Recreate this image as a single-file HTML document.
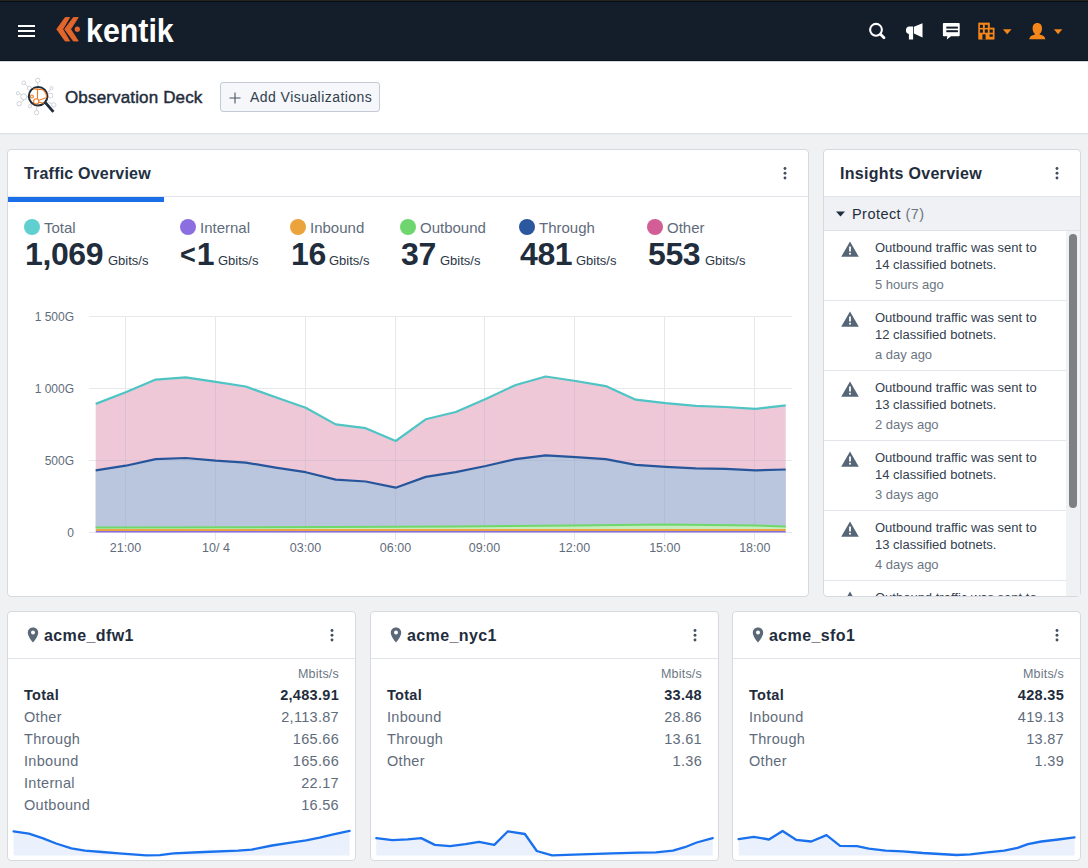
<!DOCTYPE html>
<html><head><meta charset="utf-8">
<style>
*{box-sizing:border-box;margin:0;padding:0}
html,body{width:1088px;height:868px;overflow:hidden;background:#f0f1f3;font-family:"Liberation Sans",sans-serif;color:#1f2d3d;position:relative}
.abs{position:absolute}
.card{background:#fff;border:1px solid #d6dae0;border-radius:4px}
.t{position:absolute;white-space:nowrap;line-height:1}
.gray{color:#5f6c7b}
.dots{position:absolute;width:3px}
.dots i{display:block;width:3px;height:3px;border-radius:50%;background:#3c4654;margin-bottom:1.7px}
</style></head><body>
<div class="abs" style="left:0;top:0;width:1088px;height:61px;background:#141e2b;border-top:1px solid #2a2420;border-bottom:1px solid #0c121a"></div>
<div class="abs" style="left:18px;top:25px;width:17px;height:2px;background:#fff"></div>
<div class="abs" style="left:18px;top:30px;width:17px;height:2px;background:#fff"></div>
<div class="abs" style="left:18px;top:35px;width:17px;height:2px;background:#fff"></div>
<svg class="abs" style="left:0;top:0" width="180" height="61" viewBox="0 0 180 61">
  <g fill="#e4652a" stroke="#e4652a" stroke-width="0.9" stroke-linejoin="round">
  <path d="M65.2 17.5 L69.6 17.5 L62.7 29.2 L69.6 41 L65.2 41 L56.8 29.2 Z"/>
  <path d="M73.4 17.5 L78.2 17.5 L70.6 29.2 L78.2 41 L73.4 41 L64.7 29.2 Z"/>
  </g>
  <circle cx="77.3" cy="29.2" r="2.6" fill="#e4652a"/>
</svg>
<div class="t" style="left:86px;top:13.5px;font-size:33px;font-weight:bold;color:#fff;transform:scaleX(0.92);transform-origin:0 0">kentik</div>
<svg class="abs" style="left:860px;top:15px" width="220" height="30" viewBox="860 15 220 30">
  <circle cx="876" cy="29.8" r="5.9" fill="none" stroke="#fff" stroke-width="2.1"/>
  <path d="M880.5 34.3 L884 37.8" stroke="#fff" stroke-width="2.8" stroke-linecap="round"/>
  <path d="M913.1 26.5 L909.3 26.5 C907 26.5 905.9 28.3 905.9 30.2 C905.9 32.3 907 33.7 908.9 33.9 L908.9 39.5 L913.1 39.5 Z" fill="#fff"/>
  <path d="M913.9 26.7 L922.5 23.3 L922.5 37.6 L913.9 33.4 Z" fill="#fff"/>
  <path d="M943.8 22.9 L958.8 22.9 Q959.7 22.9 959.7 23.8 L959.7 35.3 Q959.7 36.2 958.8 36.2 L951 36.2 L946.8 39.5 L947.3 36.2 L943.8 36.2 Q942.9 36.2 942.9 35.3 L942.9 23.8 Q942.9 22.9 943.8 22.9 Z" fill="#fff"/>
  <rect x="946.3" y="26.6" width="11.6" height="2" fill="#141e2b"/>
  <rect x="946.3" y="30.2" width="11.6" height="2" fill="#141e2b"/>
  <path d="M978.6 22.9 H989.5 V27.9 H994.2 V39.2 H978.6 Z" fill="#f5861a" stroke="#f5861a" stroke-width="0.6" stroke-linejoin="round"/>
  <g fill="#141e2b">
    <rect x="979.9" y="24.8" width="3" height="3.1"/><rect x="984.8" y="24.8" width="3" height="3.1"/>
    <rect x="979.9" y="29.5" width="3" height="3.2"/><rect x="984.8" y="29.5" width="3" height="3.2"/><rect x="989.6" y="29.5" width="3.2" height="3.2"/>
    <rect x="982.4" y="34.3" width="3.2" height="5.3"/><rect x="989.6" y="34.3" width="3.2" height="2.5"/>
  </g>
  <path d="M1002.9 29.2 L1011.5 29.2 L1007.2 34.2 Z" fill="#f5861a"/>
  <path d="M1037.3 23.1 C1040.5 23.1 1042 25.4 1042 28.5 C1042 31.2 1041 33 1039.7 33.8 L1039.7 34.6 C1043 35.3 1045 36.6 1045.4 39.3 L1029.2 39.3 C1029.6 36.6 1031.6 35.3 1034.9 34.6 L1034.9 33.8 C1033.6 33 1032.6 31.2 1032.6 28.5 C1032.6 25.4 1034.1 23.1 1037.3 23.1 Z" fill="#f5861a"/>
  <path d="M1053.9 29.2 L1062.3 29.2 L1058.1 34.2 Z" fill="#f5861a"/>
</svg>
<div class="abs" style="left:0;top:61px;width:1088px;height:73px;background:#fff;border-bottom:1px solid #e0e1e4"></div>
<div class="abs" style="left:0;top:134px;width:1088px;height:1px;background:#e9eaec"></div>
<div class="abs" style="left:0;top:61px;width:1088px;height:1px;background:#d5d8dc"></div>
<div class="abs" style="left:0;top:1px;width:1088px;height:1px;background:#020e1a"></div>
<svg class="abs" style="left:10px;top:70px" width="55" height="50" viewBox="10 70 55 50">
  <g fill="#fff" stroke="#c8cdd4" stroke-width="0.9">
    <path d="M37.8 82.5 L37.8 86 M25.2 84.2 L30 89 M19.4 93.7 L25 96 M21 102.5 L24.5 99.5 M50.8 89.5 L47.5 92.5 M52.2 104 L48.5 102 M36.5 110.4 L36.8 106.5 M31 105.5 L32.5 104 M26.7 96.8 L28.5 96.8"/>
    <circle cx="37.8" cy="80.3" r="2.2"/><circle cx="23.8" cy="82.8" r="1.8"/><circle cx="51.5" cy="88.1" r="1.6"/>
    <circle cx="17.9" cy="93.3" r="1.6"/><circle cx="23.8" cy="96.8" r="3"/><circle cx="19.2" cy="103.7" r="2.2"/>
    <circle cx="50.3" cy="95.6" r="2.5"/><circle cx="53.8" cy="104.9" r="2.2"/><circle cx="29.9" cy="106.3" r="1.6"/>
    <circle cx="36.5" cy="112.6" r="2.2"/><circle cx="29.5" cy="88.3" r="2"/>
  </g>
  <circle cx="38.1" cy="96.2" r="9.3" fill="#fff" stroke="#1f2d3d" stroke-width="2"/>
  <g fill="none" stroke="#ec7a20" stroke-width="1.1">
    <circle cx="36.2" cy="101.4" r="2.6"/><circle cx="31.9" cy="96.5" r="1.5"/>
    <path d="M33 89 L42 89.5 Q46.5 92 46.6 97.4 L39.2 100.2 M37.5 88.5 L37.5 98.8 M39 102.3 L44 103.2"/>
  </g>
  <path d="M46.5 103.8 L52.5 110.8" stroke="#1f2d3d" stroke-width="2.8" stroke-linecap="square"/>
</svg>
<div class="t" style="left:65px;top:89px;font-size:17px;color:#1f2d3d;-webkit-text-stroke:0.45px #1f2d3d;letter-spacing:0.15px">Observation Deck</div>
<div class="abs" style="left:220px;top:82px;width:160px;height:30px;background:#f5f7fa;border:1px solid #c3cad3;border-radius:3px"></div>
<svg class="abs" style="left:229px;top:92px" width="12" height="12" viewBox="0 0 12 12"><path d="M6 0.5 V11.5 M0.5 6 H11.5" stroke="#4a5566" stroke-width="1.1"/></svg>
<div class="t" style="left:250px;top:90px;font-size:14px;color:#323e4d;letter-spacing:0.45px">Add Visualizations</div>
<div class="abs card" style="left:7px;top:149px;width:802px;height:448px"></div>
<div class="abs" style="left:8px;top:196px;width:800px;height:1px;background:#e1e4e8"></div>
<div class="abs" style="left:8px;top:197px;width:156px;height:5px;background:#1a6fe8"></div>
<div class="t" style="left:24px;top:166px;font-size:16px;font-weight:bold;color:#223042;letter-spacing:0.2px">Traffic Overview</div>
<svg class="abs" style="left:782.3px;top:166.1px" width="6" height="15" viewBox="0 0 6 15"><g fill="#435060"><circle cx="3" cy="2.5" r="1.45"/><circle cx="3" cy="7.25" r="1.45"/><circle cx="3" cy="12" r="1.45"/></g></svg>
<svg class="abs" style="left:24px;top:219px" width="16" height="16"><circle cx="8" cy="8" r="8" fill="#5fcfcf"/></svg>
<div class="t gray" style="left:44px;top:219.5px;font-size:15px">Total</div>
<div class="t" style="left:25px;top:238px;font-size:32px;font-weight:bold;letter-spacing:-0.4px">1,069</div>
<div class="t" style="left:108px;top:254px;font-size:13px;color:#2b3645">Gbits/s</div>
<svg class="abs" style="left:180px;top:219px" width="16" height="16"><circle cx="8" cy="8" r="8" fill="#8b6fe0"/></svg>
<div class="t gray" style="left:200px;top:219.5px;font-size:15px">Internal</div>
<div class="t" style="left:181px;top:238px;font-size:32px;font-weight:bold;letter-spacing:-0.4px"><span style="font-size:27px;position:relative;top:-1px;margin-left:-1px;letter-spacing:1px">&lt;</span>1</div>
<div class="t" style="left:218px;top:254px;font-size:13px;color:#2b3645">Gbits/s</div>
<svg class="abs" style="left:290px;top:219px" width="16" height="16"><circle cx="8" cy="8" r="8" fill="#eba43c"/></svg>
<div class="t gray" style="left:310px;top:219.5px;font-size:15px">Inbound</div>
<div class="t" style="left:291px;top:238px;font-size:32px;font-weight:bold;letter-spacing:-0.4px">16</div>
<div class="t" style="left:329px;top:254px;font-size:13px;color:#2b3645">Gbits/s</div>
<svg class="abs" style="left:400px;top:219px" width="16" height="16"><circle cx="8" cy="8" r="8" fill="#6fd66f"/></svg>
<div class="t gray" style="left:420px;top:219.5px;font-size:15px">Outbound</div>
<div class="t" style="left:401px;top:238px;font-size:32px;font-weight:bold;letter-spacing:-0.4px">37</div>
<div class="t" style="left:440px;top:254px;font-size:13px;color:#2b3645">Gbits/s</div>
<svg class="abs" style="left:519px;top:219px" width="16" height="16"><circle cx="8" cy="8" r="8" fill="#2b579f"/></svg>
<div class="t gray" style="left:539px;top:219.5px;font-size:15px">Through</div>
<div class="t" style="left:520px;top:238px;font-size:32px;font-weight:bold;letter-spacing:-0.4px">481</div>
<div class="t" style="left:576px;top:254px;font-size:13px;color:#2b3645">Gbits/s</div>
<svg class="abs" style="left:647px;top:219px" width="16" height="16"><circle cx="8" cy="8" r="8" fill="#d25e95"/></svg>
<div class="t gray" style="left:667px;top:219.5px;font-size:15px">Other</div>
<div class="t" style="left:648px;top:238px;font-size:32px;font-weight:bold;letter-spacing:-0.4px">553</div>
<div class="t" style="left:705px;top:254px;font-size:13px;color:#2b3645">Gbits/s</div>
<svg class="abs" style="left:0;top:0" width="1088" height="868" viewBox="0 0 1088 868">
  <g stroke="#e6e8eb" stroke-width="1" fill="none">
    <path d="M89 316.5 H792 M89 388.5 H792 M89 460.5 H792 M89 532.5 H792"/>
    <path d="M125.5 316 V540 M215.5 316 V540 M305.5 316 V540 M395.5 316 V540 M484.5 316 V540 M574.5 316 V540 M664.5 316 V540 M754.5 316 V540"/>
  </g>
  <polygon fill="#efc8d7" points="95.7,403.9 125.7,392.3 155.7,379.6 185.7,377.3 215.7,381.9 245.7,386.5 275.7,397.3 305.7,407.8 335.7,424.4 365.7,428.2 395.7,441.0 425.7,419.3 455.7,412.0 485.7,398.9 515.7,385.0 545.7,376.5 575.7,381.0 605.7,386.1 635.7,399.7 665.7,403.1 695.7,405.8 725.7,407.0 755.7,408.9 785.7,405.4 785.7,528 95.7,528"/>
  <polygon fill="#bac6de" points="95.7,470.3 125.7,465.7 155.7,459.1 185.7,458.0 215.7,460.7 245.7,462.6 275.7,467.6 305.7,472.2 335.7,479.6 365.7,481.5 395.7,487.7 425.7,476.9 455.7,472.2 485.7,466.0 515.7,459.1 545.7,455.3 575.7,457.2 605.7,459.1 635.7,464.9 665.7,466.8 695.7,468.4 725.7,468.8 755.7,470.3 785.7,469.5 785.7,528 95.7,528"/>
  <g stroke="#9aa6bb" stroke-width="1" fill="none" opacity="0.22">
    <path d="M125.5 392 V528 M215.5 382 V528 M305.5 408 V528 M395.5 441 V528 M484.5 399 V528 M574.5 381 V528 M664.5 403 V528 M754.5 409 V528 M95.7 460.5 H785.7"/>
  </g>
  <polygon fill="#c6ecc0" points="95.7,527.5 335,527 455,526.5 575,525.5 665,524.5 755,525.5 785.7,526.5 785.7,529 95.7,529"/>
  <polyline fill="none" stroke="#6fd86a" stroke-width="2" points="95.7,527.5 335,527 455,526.5 575,525.5 665,524.5 755,525.5 785.7,526.5"/>
  <rect x="95.7" y="529" width="690" height="2" fill="#eba53e"/>
  <rect x="95.7" y="531" width="690" height="1.5" fill="#8b6de0"/>
  <polyline fill="none" stroke="#27559b" stroke-width="2.2" stroke-linejoin="round" points="95.7,470.3 125.7,465.7 155.7,459.1 185.7,458.0 215.7,460.7 245.7,462.6 275.7,467.6 305.7,472.2 335.7,479.6 365.7,481.5 395.7,487.7 425.7,476.9 455.7,472.2 485.7,466.0 515.7,459.1 545.7,455.3 575.7,457.2 605.7,459.1 635.7,464.9 665.7,466.8 695.7,468.4 725.7,468.8 755.7,470.3 785.7,469.5"/>
  <polyline fill="none" stroke="#4ec5c4" stroke-width="2.2" stroke-linejoin="round" points="95.7,403.9 125.7,392.3 155.7,379.6 185.7,377.3 215.7,381.9 245.7,386.5 275.7,397.3 305.7,407.8 335.7,424.4 365.7,428.2 395.7,441.0 425.7,419.3 455.7,412.0 485.7,398.9 515.7,385.0 545.7,376.5 575.7,381.0 605.7,386.1 635.7,399.7 665.7,403.1 695.7,405.8 725.7,407.0 755.7,408.9 785.7,405.4"/>
  <g font-family="Liberation Sans" font-size="12" fill="#5f6c7b">
    <text x="74" y="321" text-anchor="end">1 500G</text>
    <text x="74" y="393" text-anchor="end">1 000G</text>
    <text x="74" y="465" text-anchor="end">500G</text>
    <text x="74" y="537" text-anchor="end">0</text>
    <text font-size="12.5" x="125.5" y="552" text-anchor="middle">21:00</text>
    <text font-size="12.5" x="216" y="552" text-anchor="middle">10/ 4</text>
    <text font-size="12.5" x="305.5" y="552" text-anchor="middle">03:00</text>
    <text font-size="12.5" x="395.5" y="552" text-anchor="middle">06:00</text>
    <text font-size="12.5" x="484.5" y="552" text-anchor="middle">09:00</text>
    <text font-size="12.5" x="574.5" y="552" text-anchor="middle">12:00</text>
    <text font-size="12.5" x="664.8" y="552" text-anchor="middle">15:00</text>
    <text font-size="12.5" x="754.8" y="552" text-anchor="middle">18:00</text>
  </g>
</svg>
<div class="abs card" style="left:823px;top:149px;width:258px;height:448px"></div>
<div class="t" style="left:840px;top:166px;font-size:16px;font-weight:bold;color:#1f2d3d;letter-spacing:0.3px">Insights Overview</div>
<svg class="abs" style="left:1054.0px;top:166.0px" width="6" height="15" viewBox="0 0 6 15"><g fill="#435060"><circle cx="3" cy="2.5" r="1.45"/><circle cx="3" cy="7.25" r="1.45"/><circle cx="3" cy="12" r="1.45"/></g></svg>
<div class="abs" style="left:824px;top:196px;width:256px;height:35px;background:#eff1f4;border-top:1px solid #e1e4e8;border-bottom:1px solid #dfe2e7"></div>
<svg class="abs" style="left:836px;top:211px" width="9" height="6"><path d="M0 0.5 H9 L4.5 5.5Z" fill="#1f2d3d"/></svg>
<div class="t" style="left:852px;top:207px;font-size:14.5px;color:#1f2d3d;letter-spacing:0.45px">Protect <span style="color:#6b7683">(7)</span></div>
<div class="abs" style="left:1066px;top:231px;width:14px;height:365px;background:#f0f1f3"></div>
<div class="abs" style="left:1069px;top:234px;width:8px;height:274px;background:#7d7f82;border-radius:4px"></div>
<div class="abs" style="left:824px;top:231px;width:242px;height:365px;overflow:hidden">
<svg class="abs" style="left:17px;top:10px" width="18" height="16" viewBox="0 0 18 16"><path d="M9 0.5 L17.8 15.8 H0.2 Z" fill="#566677"/><rect x="8.1" y="5.5" width="1.8" height="5" fill="#fff"/><rect x="8.1" y="11.8" width="1.8" height="1.8" fill="#fff"/></svg>
<div class="t" style="left:51px;top:8px;font-size:13px;line-height:17px;color:#35414f">Outbound traffic was sent to<br>14 classified botnets.</div>
<div class="t" style="left:51px;top:47px;font-size:13px;color:#6b7683">5 hours ago</div>
<div class="abs" style="left:0;top:69px;width:242px;height:1px;background:#e3e6ea"></div>
<svg class="abs" style="left:17px;top:80px" width="18" height="16" viewBox="0 0 18 16"><path d="M9 0.5 L17.8 15.8 H0.2 Z" fill="#566677"/><rect x="8.1" y="5.5" width="1.8" height="5" fill="#fff"/><rect x="8.1" y="11.8" width="1.8" height="1.8" fill="#fff"/></svg>
<div class="t" style="left:51px;top:78px;font-size:13px;line-height:17px;color:#35414f">Outbound traffic was sent to<br>12 classified botnets.</div>
<div class="t" style="left:51px;top:117px;font-size:13px;color:#6b7683">a day ago</div>
<div class="abs" style="left:0;top:139px;width:242px;height:1px;background:#e3e6ea"></div>
<svg class="abs" style="left:17px;top:150px" width="18" height="16" viewBox="0 0 18 16"><path d="M9 0.5 L17.8 15.8 H0.2 Z" fill="#566677"/><rect x="8.1" y="5.5" width="1.8" height="5" fill="#fff"/><rect x="8.1" y="11.8" width="1.8" height="1.8" fill="#fff"/></svg>
<div class="t" style="left:51px;top:148px;font-size:13px;line-height:17px;color:#35414f">Outbound traffic was sent to<br>13 classified botnets.</div>
<div class="t" style="left:51px;top:187px;font-size:13px;color:#6b7683">2 days ago</div>
<div class="abs" style="left:0;top:209px;width:242px;height:1px;background:#e3e6ea"></div>
<svg class="abs" style="left:17px;top:220px" width="18" height="16" viewBox="0 0 18 16"><path d="M9 0.5 L17.8 15.8 H0.2 Z" fill="#566677"/><rect x="8.1" y="5.5" width="1.8" height="5" fill="#fff"/><rect x="8.1" y="11.8" width="1.8" height="1.8" fill="#fff"/></svg>
<div class="t" style="left:51px;top:218px;font-size:13px;line-height:17px;color:#35414f">Outbound traffic was sent to<br>14 classified botnets.</div>
<div class="t" style="left:51px;top:257px;font-size:13px;color:#6b7683">3 days ago</div>
<div class="abs" style="left:0;top:279px;width:242px;height:1px;background:#e3e6ea"></div>
<svg class="abs" style="left:17px;top:290px" width="18" height="16" viewBox="0 0 18 16"><path d="M9 0.5 L17.8 15.8 H0.2 Z" fill="#566677"/><rect x="8.1" y="5.5" width="1.8" height="5" fill="#fff"/><rect x="8.1" y="11.8" width="1.8" height="1.8" fill="#fff"/></svg>
<div class="t" style="left:51px;top:288px;font-size:13px;line-height:17px;color:#35414f">Outbound traffic was sent to<br>13 classified botnets.</div>
<div class="t" style="left:51px;top:327px;font-size:13px;color:#6b7683">4 days ago</div>
<div class="abs" style="left:0;top:349px;width:242px;height:1px;background:#e3e6ea"></div>
<svg class="abs" style="left:17px;top:360px" width="18" height="16" viewBox="0 0 18 16"><path d="M9 0.5 L17.8 15.8 H0.2 Z" fill="#566677"/><rect x="8.1" y="5.5" width="1.8" height="5" fill="#fff"/><rect x="8.1" y="11.8" width="1.8" height="1.8" fill="#fff"/></svg>
<div class="t" style="left:51px;top:358px;font-size:13px;line-height:17px;color:#35414f">Outbound traffic was sent to<br>13 classified botnets.</div>
<div class="t" style="left:51px;top:397px;font-size:13px;color:#6b7683">5 days ago</div>
<div class="abs" style="left:0;top:419px;width:242px;height:1px;background:#e3e6ea"></div>
</div>
<div class="abs card" style="left:7px;top:611px;width:349px;height:250px"></div>
<div class="abs" style="left:8px;top:658px;width:347px;height:1px;background:#e1e4e8"></div>
<svg class="abs" style="left:27px;top:627px" width="12" height="17" viewBox="0 0 12 17"><path d="M6 0.6 C9 0.6 11.2 2.8 11.2 5.7 C11.2 9 8 12.8 6 15.6 C4 12.8 0.8 9 0.8 5.7 C0.8 2.8 3 0.6 6 0.6Z" fill="#5a6878"/><circle cx="6" cy="5.6" r="2" fill="#fff"/></svg>
<div class="t" style="left:44px;top:628px;font-size:16px;font-weight:bold;color:#1f2d3d;letter-spacing:0.4px">acme_dfw1</div>
<svg class="abs" style="left:329.3px;top:627.9px" width="6" height="15" viewBox="0 0 6 15"><g fill="#435060"><circle cx="3" cy="2.5" r="1.45"/><circle cx="3" cy="7.25" r="1.45"/><circle cx="3" cy="12" r="1.45"/></g></svg>
<div class="t" style="left:339px;top:667.5px;width:0;font-size:12.5px;color:#6b7683;letter-spacing:0.2px"><span style="position:absolute;right:0">Mbits/s</span></div>
<div class="t" style="left:24px;top:688.0px;font-size:14.5px;letter-spacing:0.3px;font-weight:bold;color:#1f2d3d">Total</div>
<div class="t" style="left:339px;top:688.0px;width:0;font-size:14.5px;letter-spacing:0.3px;font-weight:bold;color:#1f2d3d"><span style="position:absolute;right:0">2,483.91</span></div>
<div class="t" style="left:24px;top:710.0px;font-size:14.5px;letter-spacing:0.3px;color:#5f6c7b">Other</div>
<div class="t" style="left:339px;top:710.0px;width:0;font-size:14.5px;letter-spacing:0.3px;color:#5f6c7b"><span style="position:absolute;right:0">2,113.87</span></div>
<div class="t" style="left:24px;top:732.0px;font-size:14.5px;letter-spacing:0.3px;color:#5f6c7b">Through</div>
<div class="t" style="left:339px;top:732.0px;width:0;font-size:14.5px;letter-spacing:0.3px;color:#5f6c7b"><span style="position:absolute;right:0">165.66</span></div>
<div class="t" style="left:24px;top:754.0px;font-size:14.5px;letter-spacing:0.3px;color:#5f6c7b">Inbound</div>
<div class="t" style="left:339px;top:754.0px;width:0;font-size:14.5px;letter-spacing:0.3px;color:#5f6c7b"><span style="position:absolute;right:0">165.66</span></div>
<div class="t" style="left:24px;top:776.0px;font-size:14.5px;letter-spacing:0.3px;color:#5f6c7b">Internal</div>
<div class="t" style="left:339px;top:776.0px;width:0;font-size:14.5px;letter-spacing:0.3px;color:#5f6c7b"><span style="position:absolute;right:0">22.17</span></div>
<div class="t" style="left:24px;top:798.0px;font-size:14.5px;letter-spacing:0.3px;color:#5f6c7b">Outbound</div>
<div class="t" style="left:339px;top:798.0px;width:0;font-size:14.5px;letter-spacing:0.3px;color:#5f6c7b"><span style="position:absolute;right:0">16.56</span></div>
<svg class="abs" style="left:0;top:0" width="1088" height="868"><polygon fill="#eaf0fc" points="13.6,831.3 28.9,833.6 42.5,838.1 56.1,843.5 71.4,848.3 85.0,850.6 102.0,852.0 119.0,853.4 146.2,855.4 159.8,855.1 173.4,853.4 204.0,852.0 238.1,850.6 251.7,849.6 272.1,845.5 289.1,842.8 306.1,840.4 319.7,837.7 333.3,834.3 349.6,830.9 349.6,855.5 13.6,855.5"/><polyline fill="none" stroke="#1a71ee" stroke-width="2.3" stroke-linejoin="round" stroke-linecap="round" points="13.6,831.3 28.9,833.6 42.5,838.1 56.1,843.5 71.4,848.3 85.0,850.6 102.0,852.0 119.0,853.4 146.2,855.4 159.8,855.1 173.4,853.4 204.0,852.0 238.1,850.6 251.7,849.6 272.1,845.5 289.1,842.8 306.1,840.4 319.7,837.7 333.3,834.3 349.6,830.9"/></svg>
<div class="abs card" style="left:370px;top:611px;width:349px;height:250px"></div>
<div class="abs" style="left:371px;top:658px;width:347px;height:1px;background:#e1e4e8"></div>
<svg class="abs" style="left:390px;top:627px" width="12" height="17" viewBox="0 0 12 17"><path d="M6 0.6 C9 0.6 11.2 2.8 11.2 5.7 C11.2 9 8 12.8 6 15.6 C4 12.8 0.8 9 0.8 5.7 C0.8 2.8 3 0.6 6 0.6Z" fill="#5a6878"/><circle cx="6" cy="5.6" r="2" fill="#fff"/></svg>
<div class="t" style="left:407px;top:628px;font-size:16px;font-weight:bold;color:#1f2d3d;letter-spacing:0.4px">acme_nyc1</div>
<svg class="abs" style="left:692.3px;top:627.9px" width="6" height="15" viewBox="0 0 6 15"><g fill="#435060"><circle cx="3" cy="2.5" r="1.45"/><circle cx="3" cy="7.25" r="1.45"/><circle cx="3" cy="12" r="1.45"/></g></svg>
<div class="t" style="left:702px;top:667.5px;width:0;font-size:12.5px;color:#6b7683;letter-spacing:0.2px"><span style="position:absolute;right:0">Mbits/s</span></div>
<div class="t" style="left:387px;top:688.0px;font-size:14.5px;letter-spacing:0.3px;font-weight:bold;color:#1f2d3d">Total</div>
<div class="t" style="left:702px;top:688.0px;width:0;font-size:14.5px;letter-spacing:0.3px;font-weight:bold;color:#1f2d3d"><span style="position:absolute;right:0">33.48</span></div>
<div class="t" style="left:387px;top:710.0px;font-size:14.5px;letter-spacing:0.3px;color:#5f6c7b">Inbound</div>
<div class="t" style="left:702px;top:710.0px;width:0;font-size:14.5px;letter-spacing:0.3px;color:#5f6c7b"><span style="position:absolute;right:0">28.86</span></div>
<div class="t" style="left:387px;top:732.0px;font-size:14.5px;letter-spacing:0.3px;color:#5f6c7b">Through</div>
<div class="t" style="left:702px;top:732.0px;width:0;font-size:14.5px;letter-spacing:0.3px;color:#5f6c7b"><span style="position:absolute;right:0">13.61</span></div>
<div class="t" style="left:387px;top:754.0px;font-size:14.5px;letter-spacing:0.3px;color:#5f6c7b">Other</div>
<div class="t" style="left:702px;top:754.0px;width:0;font-size:14.5px;letter-spacing:0.3px;color:#5f6c7b"><span style="position:absolute;right:0">1.36</span></div>
<svg class="abs" style="left:0;top:0" width="1088" height="868"><polygon fill="#eaf0fc" points="376.3,838.1 392.3,840.1 407.6,839.4 421.2,838.1 434.8,844.9 450.1,846.2 465.4,844.2 479.0,841.8 494.3,844.9 507.9,831.3 524.9,834.0 536.8,851.0 552.1,855.4 581.1,854.4 611.7,853.4 638.9,852.7 655.9,852.3 672.9,850.6 684.8,847.2 696.7,842.5 712.7,838.1 712.7,855.5 376.3,855.5"/><polyline fill="none" stroke="#1a71ee" stroke-width="2.3" stroke-linejoin="round" stroke-linecap="round" points="376.3,838.1 392.3,840.1 407.6,839.4 421.2,838.1 434.8,844.9 450.1,846.2 465.4,844.2 479.0,841.8 494.3,844.9 507.9,831.3 524.9,834.0 536.8,851.0 552.1,855.4 581.1,854.4 611.7,853.4 638.9,852.7 655.9,852.3 672.9,850.6 684.8,847.2 696.7,842.5 712.7,838.1"/></svg>
<div class="abs card" style="left:732px;top:611px;width:349px;height:250px"></div>
<div class="abs" style="left:733px;top:658px;width:347px;height:1px;background:#e1e4e8"></div>
<svg class="abs" style="left:752px;top:627px" width="12" height="17" viewBox="0 0 12 17"><path d="M6 0.6 C9 0.6 11.2 2.8 11.2 5.7 C11.2 9 8 12.8 6 15.6 C4 12.8 0.8 9 0.8 5.7 C0.8 2.8 3 0.6 6 0.6Z" fill="#5a6878"/><circle cx="6" cy="5.6" r="2" fill="#fff"/></svg>
<div class="t" style="left:769px;top:628px;font-size:16px;font-weight:bold;color:#1f2d3d;letter-spacing:0.4px">acme_sfo1</div>
<svg class="abs" style="left:1054.3px;top:627.9px" width="6" height="15" viewBox="0 0 6 15"><g fill="#435060"><circle cx="3" cy="2.5" r="1.45"/><circle cx="3" cy="7.25" r="1.45"/><circle cx="3" cy="12" r="1.45"/></g></svg>
<div class="t" style="left:1064px;top:667.5px;width:0;font-size:12.5px;color:#6b7683;letter-spacing:0.2px"><span style="position:absolute;right:0">Mbits/s</span></div>
<div class="t" style="left:749px;top:688.0px;font-size:14.5px;letter-spacing:0.3px;font-weight:bold;color:#1f2d3d">Total</div>
<div class="t" style="left:1064px;top:688.0px;width:0;font-size:14.5px;letter-spacing:0.3px;font-weight:bold;color:#1f2d3d"><span style="position:absolute;right:0">428.35</span></div>
<div class="t" style="left:749px;top:710.0px;font-size:14.5px;letter-spacing:0.3px;color:#5f6c7b">Inbound</div>
<div class="t" style="left:1064px;top:710.0px;width:0;font-size:14.5px;letter-spacing:0.3px;color:#5f6c7b"><span style="position:absolute;right:0">419.13</span></div>
<div class="t" style="left:749px;top:732.0px;font-size:14.5px;letter-spacing:0.3px;color:#5f6c7b">Through</div>
<div class="t" style="left:1064px;top:732.0px;width:0;font-size:14.5px;letter-spacing:0.3px;color:#5f6c7b"><span style="position:absolute;right:0">13.87</span></div>
<div class="t" style="left:749px;top:754.0px;font-size:14.5px;letter-spacing:0.3px;color:#5f6c7b">Other</div>
<div class="t" style="left:1064px;top:754.0px;width:0;font-size:14.5px;letter-spacing:0.3px;color:#5f6c7b"><span style="position:absolute;right:0">1.39</span></div>
<svg class="abs" style="left:0;top:0" width="1088" height="868"><polygon fill="#eaf0fc" points="738.6,839.1 753.8,836.8 769.0,839.5 782.6,831.0 796.1,839.8 811.3,841.5 826.5,835.1 840.1,845.9 857.0,846.2 868.8,848.6 885.7,850.6 902.6,851.3 922.9,853.0 956.8,855.0 970.3,854.4 987.2,852.3 1004.1,850.6 1017.6,847.9 1027.8,844.2 1041.3,841.5 1058.2,839.5 1074.5,837.4 1074.5,855.5 738.6,855.5"/><polyline fill="none" stroke="#1a71ee" stroke-width="2.3" stroke-linejoin="round" stroke-linecap="round" points="738.6,839.1 753.8,836.8 769.0,839.5 782.6,831.0 796.1,839.8 811.3,841.5 826.5,835.1 840.1,845.9 857.0,846.2 868.8,848.6 885.7,850.6 902.6,851.3 922.9,853.0 956.8,855.0 970.3,854.4 987.2,852.3 1004.1,850.6 1017.6,847.9 1027.8,844.2 1041.3,841.5 1058.2,839.5 1074.5,837.4"/></svg>
</body></html>
